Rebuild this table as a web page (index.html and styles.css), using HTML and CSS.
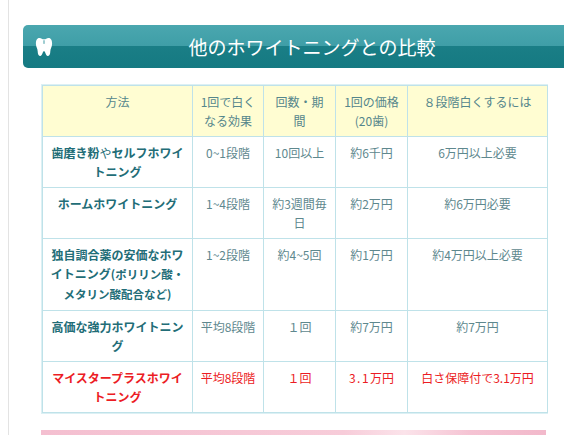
FILE: index.html
```html
<!DOCTYPE html>
<html lang="ja">
<head>
<meta charset="utf-8">
<title>他のホワイトニングとの比較</title>
<link rel="stylesheet" href="styles.css">
</head>
<body>
<div class="page">
  <h2 class="band">
    <svg class="tooth" viewBox="0 0 20 22" width="18" height="20" aria-hidden="true">
      <path d="M5 1C2 1 1 4 1 7.5C1 11 3 13 3 16C3 19 4 21 6 21C8 21 8 17 10 15.5C12 17 12 21 14 21C16 21 17 19 17 16C17 13 19 11 19 7.5C19 4 18 1 15 1C13 1 12 2.5 10 2.5C8 2.5 7 1 5 1Z" fill="#fff"/>
      <path d="M10 3.5L10 7.5" stroke="#3d9aa2" stroke-width="1.1" fill="none"/>
    </svg>
    <span class="band-title">他のホワイトニングとの比較</span>
  </h2>
  <div class="content">
    <div class="table-wrap">
      <table class="cmp">
        <colgroup>
          <col class="c1"><col class="c2"><col class="c3"><col class="c4"><col class="c5">
        </colgroup>
        <thead>
          <tr>
            <th>方法</th>
            <th>1回で白くなる効果</th>
            <th>回数・期間</th>
            <th>1回の価格(20歯)</th>
            <th>８段階白くするには</th>
          </tr>
        </thead>
        <tbody>
          <tr>
            <td class="name">歯磨き粉<span class="thin">や</span>セルフホワイトニング</td>
            <td>0~1段階</td>
            <td>10回以上</td>
            <td>約6千円</td>
            <td>6万円以上必要</td>
          </tr>
          <tr>
            <td class="name">ホームホワイトニング</td>
            <td>1~4段階</td>
            <td>約3週間毎日</td>
            <td>約2万円</td>
            <td>約6万円必要</td>
          </tr>
          <tr>
            <td class="name">独自調合薬の安価なホワイトニング<span class="small">(ポリリン酸・メタリン酸配合など)</span></td>
            <td>1~2段階</td>
            <td>約4~5回</td>
            <td>約1万円</td>
            <td>約4万円以上必要</td>
          </tr>
          <tr>
            <td class="name">高価な強力ホワイトニング</td>
            <td>平均8段階</td>
            <td>１回</td>
            <td>約7万円</td>
            <td>約7万円</td>
          </tr>
          <tr class="ours">
            <td class="name">マイスタープラスホワイトニング</td>
            <td>平均8段階</td>
            <td>１回</td>
            <td><span class="spaced">3.1</span>万円</td>
            <td>白さ保障付で3.1万円</td>
          </tr>
        </tbody>
      </table>
    </div>
    <div class="banner"></div>
  </div>
</div>
</body>
</html>
```
FILE: styles.css
```css
html, body {
  margin: 0;
  padding: 0;
  background: #fff;
  overflow: hidden;
}
body {
  font-family: "Noto Sans CJK JP", "Noto Sans", sans-serif;
}
.page {
  margin-left: 8px;
  border-left: 1px solid #e3e3e3;
  height: 100vh;
  padding: 25px 0 0 14px;
  box-sizing: border-box;
  overflow: hidden;
}
.band {
  margin: 0;
  height: 43px;
  border-radius: 5px 0 0 5px;
  background: linear-gradient(#4aa7af 0, #3f9ea7 49%, #1a7e86 50%, #157a82 100%);
  display: flex;
  align-items: center;
  padding: 0 13px 0 12px;
  color: #fff;
  font-weight: normal;
}
.tooth {
  flex: none;
  display: block;
}
.band-title {
  flex: 1;
  text-align: center;
  font-size: 19px;
  line-height: 24px;
  padding-left: 20px;
}
.content {
  padding: 16px 0 0 18px;
}
.table-wrap {
  width: 505px;
  border: 1px solid #dcf0f4;
}
.cmp {
  width: 505px;
  border-collapse: collapse;
  table-layout: fixed;
  font-size: 12px;
  line-height: 19px;
  color: #5e888e;
}
.c1 { width: 150px; }
.c2 { width: 71px; }
.c3 { width: 72px; }
.c4 { width: 72px; }
.c5 { width: 140px; }
.cmp th, .cmp td {
  border: 1px solid #bfe2e9;
  padding: 6px 7px;
  text-align: center;
  vertical-align: top;
  height: 38px;
}
.cmp th {
  background: #fffdd2;
  font-weight: normal;
  color: #55868c;
}
.cmp td.name {
  font-weight: bold;
  color: #226d77;
}
.thin {
  font-weight: normal;
}
.small {
  font-size: 11.5px;
}
.ours td, .ours td.name {
  color: #ec1c24;
}
.spaced {
  letter-spacing: 1.5px;
}
.banner {
  margin-top: 16px;
  width: 505px;
  height: 30px;
  background: linear-gradient(90deg, #f4bfd0 0%, #f7ccd9 60%, #fbe3ea 72%, #f5c3d3 85%, #f2b9cb 100%);
}
```
